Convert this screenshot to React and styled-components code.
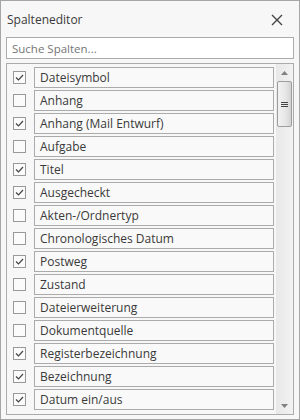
import styled, { createGlobalStyle } from "styled-components";
import { useState } from "react";

const Global = createGlobalStyle`
  body {
    margin: 0;
    background: #ffffff;
  }
  * {
    box-sizing: border-box;
  }
`

const spalten = [
    { name: 'Dateisymbol', an: true },
    { name: 'Anhang', an: false },
    { name: 'Anhang (Mail Entwurf)', an: true },
    { name: 'Aufgabe', an: false },
    { name: 'Titel', an: true },
    { name: 'Ausgecheckt', an: true },
    { name: 'Akten-/Ordnertyp', an: false },
    { name: 'Chronologisches Datum', an: false },
    { name: 'Postweg', an: true },
    { name: 'Zustand', an: false },
    { name: 'Dateierweiterung', an: false },
    { name: 'Dokumentquelle', an: false },
    { name: 'Registerbezeichnung', an: true },
    { name: 'Bezeichnung', an: true },
    { name: 'Datum ein/aus', an: true },
]

export default function App() {

    const [lista, setLista] = useState(spalten)
    const [busca, setBusca] = useState('')

    function alternar(i) {
        const nova = [...lista]
        nova[i] = { ...nova[i], an: !nova[i].an }
        setLista(nova)
    }

    return (
        <>
            <Global />
            <Window>
                <Header>
                    <Title>Spalteneditor</Title>
                    <CloseButton>
                        <svg width="12" height="12" viewBox="0 0 12 12">
                            <path d="M1 1 L11 11 M11 1 L1 11" stroke="#444" strokeWidth="1.4" fill="none" />
                        </svg>
                    </CloseButton>
                </Header>
                <Search placeholder="Suche Spalten..." value={busca} onChange={e => setBusca(e.target.value)} />
                <ListBox>
                    <Rows>
                        {lista.map((s, i) => (
                            <Row key={s.name}>
                                <Check onClick={() => alternar(i)}>
                                    {s.an && (
                                        <svg width="11" height="11" viewBox="0 0 11 11">
                                            <path d="M2 5.5 L4.5 8 L9 3" stroke="#444" strokeWidth="1.2" fill="none" />
                                        </svg>
                                    )}
                                </Check>
                                <NameBox>{s.name}</NameBox>
                            </Row>
                        ))}
                    </Rows>
                    <ScrollBar>
                        <Arrow>
                            <svg width="7" height="4" viewBox="0 0 7 4"><path d="M3.5 0 L7 4 L0 4 Z" fill="#808080" /></svg>
                        </Arrow>
                        <Track>
                            <Thumb>
                                <Grip />
                                <Grip />
                                <Grip />
                            </Thumb>
                        </Track>
                        <Arrow>
                            <svg width="7" height="4" viewBox="0 0 7 4"><path d="M0 0 L7 0 L3.5 4 Z" fill="#808080" /></svg>
                        </Arrow>
                    </ScrollBar>
                </ListBox>
            </Window>
        </>
    );
}

const Window = styled.div`
width: 300px;
height: 420px;
border: 1px solid #a6a6a6;
background: #f7f7f7;
display: flex;
flex-direction: column;
padding: 0 5px 4px 5px;
font-family: 'Open Sans', 'Noto Sans', sans-serif;
color: #333333;
`
const Header = styled.div`
height: 36px;
display: flex;
align-items: center;
justify-content: space-between;
padding-top: 1px;
`
const Title = styled.span`
font-size: 12px;
color: #3a3a3a;
padding-left: 1px;
`
const CloseButton = styled.div`
width: 20px;
height: 20px;
margin-right: 7px;
display: flex;
align-items: center;
justify-content: center;
`
const Search = styled.input`
height: 22px;
width: 100%;
border: 1px solid #ababab;
background: #ffffff;
outline: none;
padding: 0 5px;
font-family: 'Open Sans', 'Noto Sans', sans-serif;
font-size: 11.5px;
margin-bottom: 4px;
::placeholder{
    color: #9a9a9a;
}
`
const ListBox = styled.div`
flex: 1;
border: 1px solid #ababab;
display: flex;
overflow: hidden;
`
const Rows = styled.div`
flex: 1;
display: flex;
flex-direction: column;
gap: 2px;
padding: 3px 2px 0 6px;
`
const Row = styled.div`
display: flex;
align-items: center;
gap: 8px;
height: 21px;
flex-shrink: 0;
`
const Check = styled.div`
width: 13px;
height: 13px;
border: 1px solid #999999;
background: #fbfbfb;
display: flex;
align-items: center;
justify-content: center;
`
const NameBox = styled.div`
flex: 1;
height: 21px;
border: 1px solid #ababab;
background: #f9f9f9;
font-size: 12px;
line-height: 19px;
padding-left: 5px;
white-space: nowrap;
color: #3a3a3a;
`
const ScrollBar = styled.div`
width: 17px;
display: flex;
flex-direction: column;
background: linear-gradient(to right, #e8e8e8, #f2f2f2);
`
const Arrow = styled.div`
height: 17px;
display: flex;
align-items: center;
justify-content: center;
`
const Track = styled.div`
flex: 1;
`
const Thumb = styled.div`
margin: 0 1px;
height: 46px;
border: 1px solid #9d9d9d;
border-radius: 2px;
background: linear-gradient(to right, #f2f2f2, #e6e6e6 60%, #d2d2d2);
display: flex;
flex-direction: column;
align-items: center;
justify-content: center;
gap: 1px;
`
const Grip = styled.div`
width: 7px;
height: 1px;
background: #444;
`
